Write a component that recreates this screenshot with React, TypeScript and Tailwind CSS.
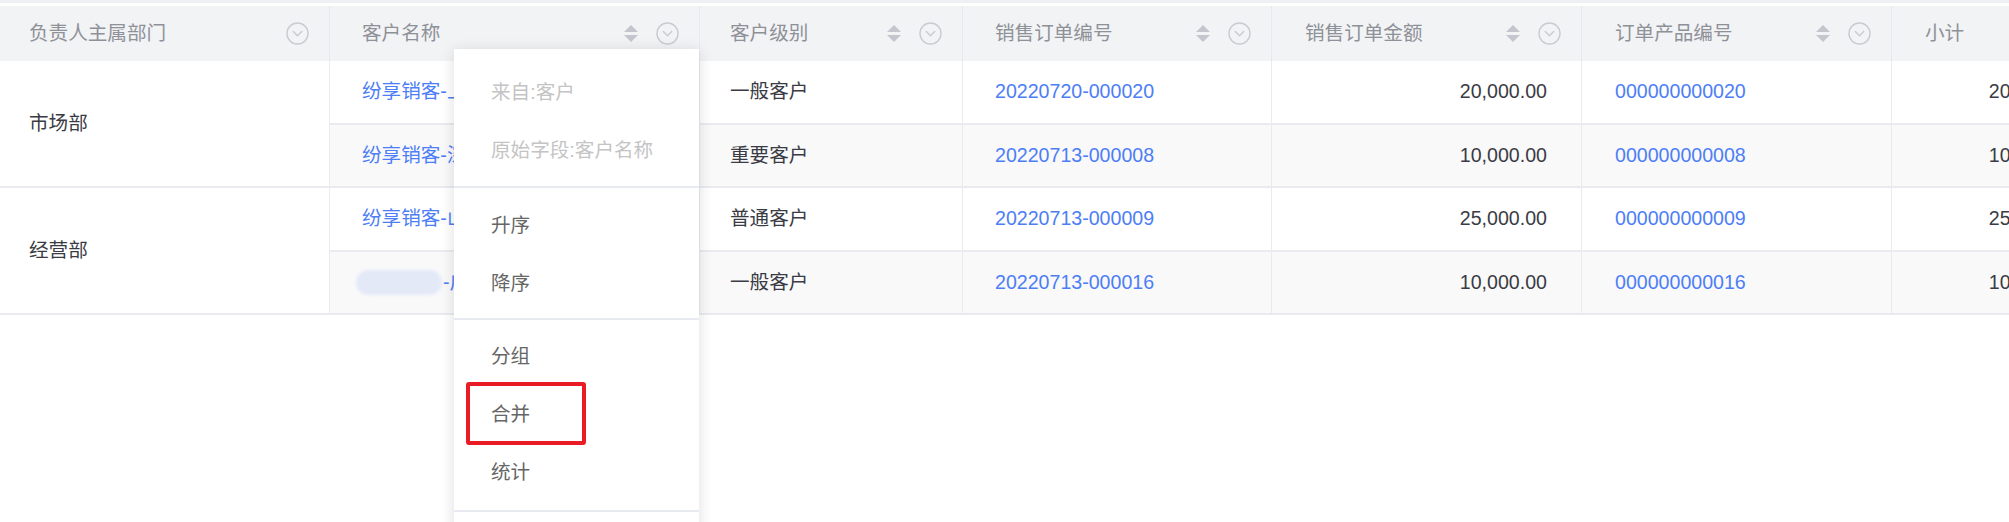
import React from 'react';

const font = { fontFamily: '"Liberation Sans", "Noto Sans CJK SC", sans-serif' };

function SortIcon() {
  return (
    <svg width="14" height="17" viewBox="0 0 14 17" className="shrink-0">
      <path d="M7 0 L14 7 L0 7 Z" fill="#c3c6cd" />
      <path d="M0 10 L14 10 L7 17 Z" fill="#c3c6cd" />
    </svg>
  );
}

function CircleDown() {
  return (
    <svg width="23" height="23" viewBox="0 0 23 23" className="shrink-0">
      <circle cx="11.5" cy="11.5" r="10.5" fill="none" stroke="#c9cbd1" strokeWidth="1.4" />
      <path d="M7.3 9.6 L11.5 13.8 L15.7 9.6" fill="none" stroke="#c9cbd1" strokeWidth="1.4" strokeLinecap="round" strokeLinejoin="round" />
    </svg>
  );
}

function HeadCell({ title, sort = true, pl = 'pl-[29px]' }: { title: string; sort?: boolean; pl?: string }) {
  return (
    <div className={`flex items-center justify-between bg-[#f2f3f5] border-r border-[#e7e9ef] ${pl} pr-[20px] text-[#8e9198]`}>
      <span>{title}</span>
      <div className="flex items-center gap-[18px]">
        {sort && <SortIcon />}
        <CircleDown />
      </div>
    </div>
  );
}

type Row = {
  name: string;
  level: string;
  order: string;
  amount: string;
  code: string;
  blurred?: boolean;
};

const groups: { dept: string; rows: Row[] }[] = [
  {
    dept: '市场部',
    rows: [
      { name: '纷享销客-上海', level: '一般客户', order: '20220720-000020', amount: '20,000.00', code: '000000000020' },
      { name: '纷享销客-深圳', level: '重要客户', order: '20220713-000008', amount: '10,000.00', code: '000000000008' },
    ],
  },
  {
    dept: '经营部',
    rows: [
      { name: '纷享销客-山东', level: '普通客户', order: '20220713-000009', amount: '25,000.00', code: '000000000009' },
      { name: '-广州', level: '一般客户', order: '20220713-000016', amount: '10,000.00', code: '000000000016', blurred: true },
    ],
  },
];

function Menu() {
  return (
    <div className="absolute left-[454px] top-[49px] w-[245px] h-[500px] bg-white shadow-[0_2px_14px_rgba(0,0,0,0.13)] text-[#666666]">
      <div className="pt-[15px] pb-[6px]">
        <div className="h-[58px] flex items-center pl-[37px] text-[#c4c4c4]">来自:客户</div>
        <div className="h-[58px] flex items-center pl-[37px] text-[#c4c4c4]">原始字段:客户名称</div>
      </div>
      <div className="h-[2px] bg-[#e8eaf1]" />
      <div className="pt-[9px] pb-[5px]">
        <div className="h-[58px] flex items-center pl-[37px]">升序</div>
        <div className="h-[58px] flex items-center pl-[37px]">降序</div>
      </div>
      <div className="h-[2px] bg-[#e8eaf1]" />
      <div className="pt-[8px] pb-[8px]">
        <div className="h-[58px] flex items-center pl-[37px]">分组</div>
        <div className="relative h-[58px] flex items-center pl-[37px]">
          合并
          <div className="absolute left-[12px] top-[-4px] w-[120px] h-[63px] border-[4px] border-[#e91c26] rounded-[3px]" />
        </div>
        <div className="h-[58px] flex items-center pl-[37px]">统计</div>
      </div>
      <div className="h-[2px] bg-[#e8eaf1]" />
    </div>
  );
}

export default function App() {
  return (
    <div className="relative w-[2009px] h-[522px] overflow-hidden bg-white text-[19.6px]" style={font}>
      <div className="h-[3px] bg-[#eff0f3]" />
      <div className="h-[3px] bg-white" />
      <div className="grid grid-cols-[330px_370px_263px_309px_310px_310px_219px] grid-rows-[55px_64px_63px_64px_63px] w-[2111px]">
        <HeadCell title="负责人主属部门" sort={false} />
        <HeadCell title="客户名称" pl="pl-[32px]" />
        <HeadCell title="客户级别" pl="pl-[30px]" />
        <HeadCell title="销售订单编号" pl="pl-[32px]" />
        <HeadCell title="销售订单金额" pl="pl-[33px]" />
        <HeadCell title="订单产品编号" pl="pl-[33px]" />
        <HeadCell title="小计" pl="pl-[33px]" />

        {groups.map((g) => (
          <React.Fragment key={g.dept}>
            <div className="row-span-2 flex items-center pl-[29px] bg-white border-r border-b-2 border-[#e9ebf1] text-[#3a3b44]">
              {g.dept}
            </div>
            {g.rows.map((r, i) => {
              const bg = i === 1 ? 'bg-[#f9f9fa]' : 'bg-white';
              const cell = `${bg} flex items-center border-r border-b-2 border-[#e9ebf1]`;
              return (
                <React.Fragment key={r.order}>
                  <div className={`${cell} pl-[32px] text-[#4d7ef5] whitespace-nowrap overflow-hidden`}>
                    {r.blurred && (
                      <span className="inline-block ml-[-6px] mr-[1px] w-[86px] h-[25px] rounded-full bg-[#e4e9f8] blur-[1.5px]" />
                    )}
                    {r.name}
                  </div>
                  <div className={`${cell} pl-[30px] text-[#3a3b44]`}>{r.level}</div>
                  <div className={`${cell} pl-[32px] text-[#4d7ef5]`}>{r.order}</div>
                  <div className={`${cell} justify-end pr-[34px] text-[#3a3b44]`}>{r.amount}</div>
                  <div className={`${cell} pl-[33px] text-[#4d7ef5]`}>{r.code}</div>
                  <div className={`${cell} justify-end pr-[34px] text-[#3a3b44]`}>{r.amount}</div>
                </React.Fragment>
              );
            })}
          </React.Fragment>
        ))}
      </div>
      <Menu />
    </div>
  );
}
